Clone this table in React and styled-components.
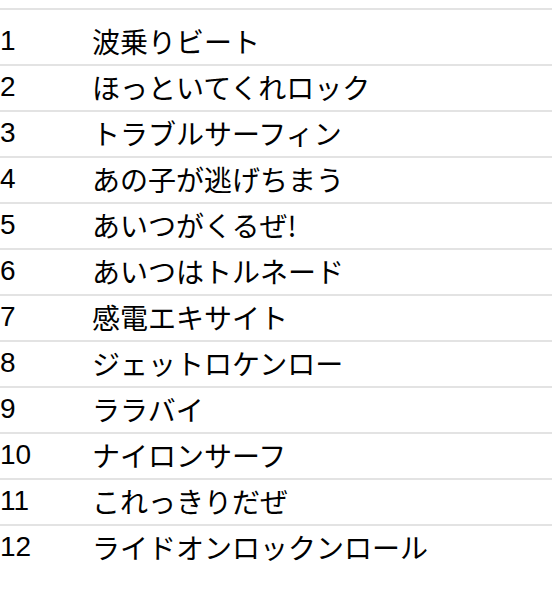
import React from 'react';
import styled, { createGlobalStyle } from 'styled-components';

const GlobalStyle = createGlobalStyle`
  body {
    margin: 8px 0 0 0;
    background: #fff;
    font-family: "Liberation Sans", "Noto Sans CJK JP", sans-serif;
  }
`;

const List = styled.div`
  border-top: 2px solid #e3e3e3;
  padding-top: 10px;
`;

const Row = styled.div`
  display: flex;
  align-items: center;
  height: 44px;
  border-bottom: ${props => props.$last ? 'none' : '2px solid #e3e3e3'};
  color: #000;
  font-size: 28px;
  line-height: 1;
`;

const Num = styled.div`
  width: 92px;
  flex-shrink: 0;
  font-family: "Liberation Sans", sans-serif;
  padding-bottom: 3px;
`;

const Title = styled.div`
  font-family: "Noto Sans CJK JP", sans-serif;
  padding-bottom: 3px;
`;

const tracks = [
  '波乗りビート',
  'ほっといてくれロック',
  'トラブルサーフィン',
  'あの子が逃げちまう',
  'あいつがくるぜ!',
  'あいつはトルネード',
  '感電エキサイト',
  'ジェットロケンロー',
  'ララバイ',
  'ナイロンサーフ',
  'これっきりだぜ',
  'ライドオンロックンロール',
];

const App = () => (
  <>
    <GlobalStyle />
    <List>
      {tracks.map((title, idx) => (
        <Row key={idx} $last={idx === tracks.length - 1}>
          <Num>{idx + 1}</Num>
          <Title>{title}</Title>
        </Row>
      ))}
    </List>
  </>
);

export default App;
